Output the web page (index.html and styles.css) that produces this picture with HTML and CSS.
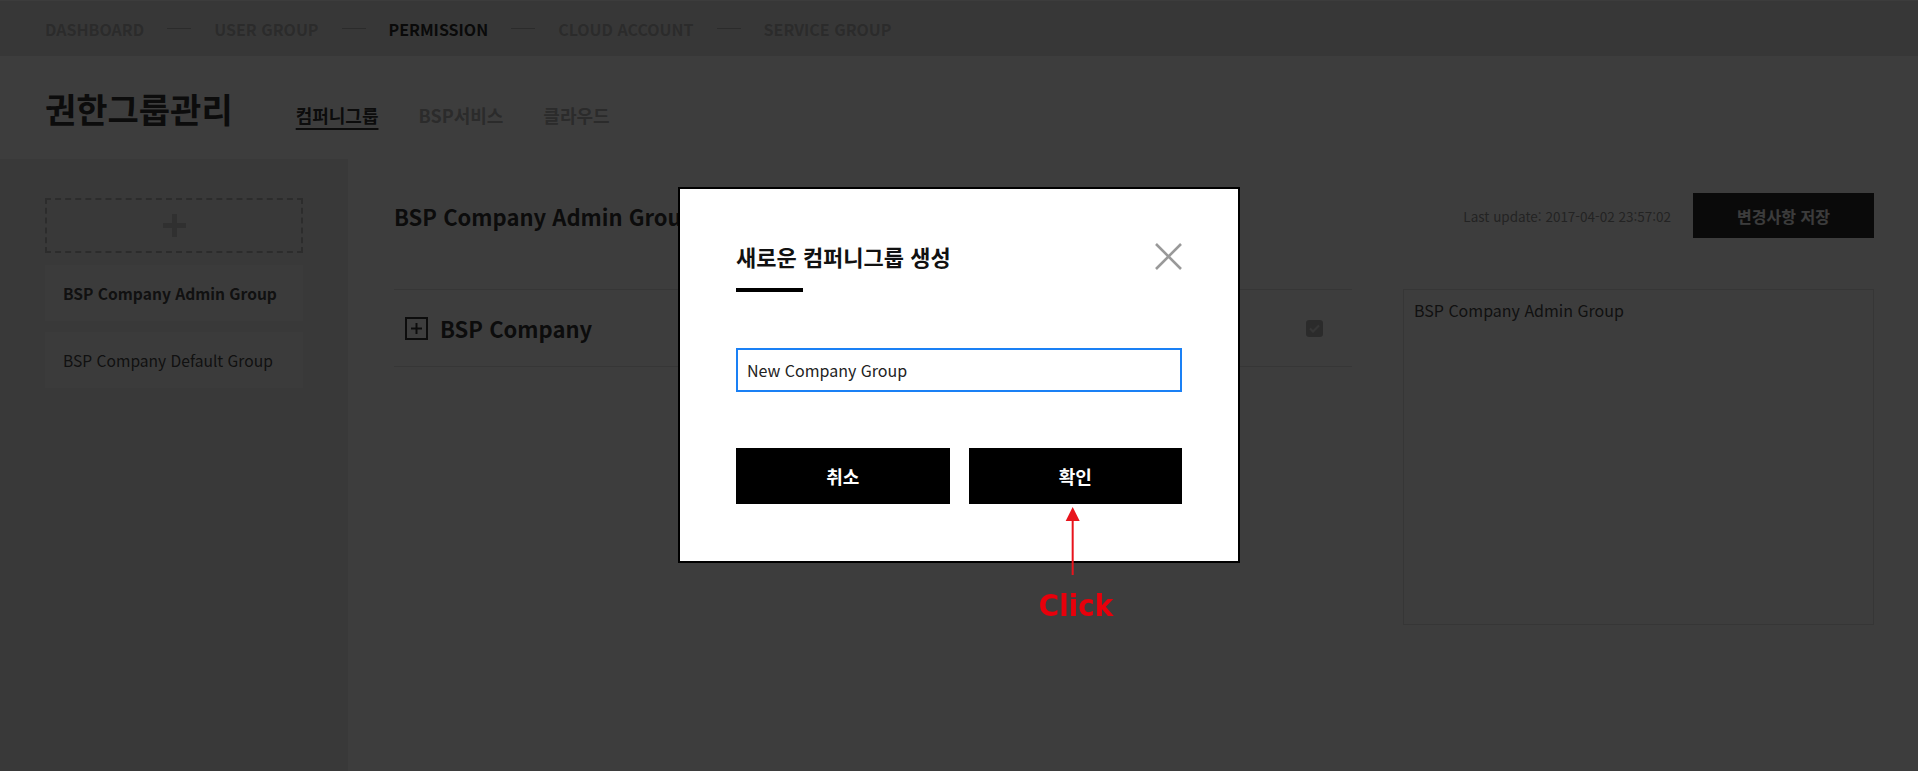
FILE: index.html
```html
<!DOCTYPE html>
<html lang="ko">
<head>
    <meta charset="UTF-8">
    <title>권한그룹관리</title>
    <link rel="stylesheet" href="styles.css">
</head>
<body>
    <!-- 상단 단계 메뉴 -->
    <div class="topnav">
        <span class="step">DASHBOARD</span><span class="dash"></span>
        <span class="step">USER GROUP</span><span class="dash"></span>
        <span class="step on">PERMISSION</span><span class="dash"></span>
        <span class="step">CLOUD ACCOUNT</span><span class="dash"></span>
        <span class="step">SERVICE GROUP</span>
    </div>

    <!-- 페이지 제목 + 탭 -->
    <div class="page-head">
        <h1>권한그룹관리</h1>
        <ul class="tabs">
            <li class="on">컴퍼니그룹</li>
            <li>BSP서비스</li>
            <li>클라우드</li>
        </ul>
    </div>

    <div class="wrap">
        <!-- 그룹 목록 -->
        <div class="side">
            <div class="add-group">
                <svg width="23" height="23" viewBox="0 0 23 23"><rect x="9" y="0" width="5" height="23" fill="#c0c0c0"/><rect x="0" y="9" width="23" height="5" fill="#c0c0c0"/></svg>
            </div>
            <div class="group-item on">BSP Company Admin Group</div>
            <div class="group-item">BSP Company Default Group</div>
        </div>

        <!-- 권한 내용 -->
        <div class="main">
            <div class="main-top">
                <h2>BSP Company Admin Group</h2>
                <span class="last-update">Last update: 2017-04-02 23:57:02</span>
                <button class="btn-save">변경사항 저장</button>
            </div>
            <div class="main-body">
                <div class="tree">
                    <div class="tree-row">
                        <svg class="expand" width="23" height="23" viewBox="0 0 23 23"><rect x="1" y="1" width="21" height="21" fill="none" stroke="#333" stroke-width="2"/><rect x="10.5" y="6" width="2" height="11" fill="#333"/><rect x="6" y="10.5" width="11" height="2" fill="#333"/></svg>
                        <span class="tree-name">BSP Company</span>
                        <svg width="17" height="17" viewBox="0 0 17 17"><rect width="17" height="17" rx="3" fill="#acacac"/><path d="M4 8.5l3 3 6-6" fill="none" stroke="#d8d8d8" stroke-width="2"/></svg>
                    </div>
                </div>
                <div class="desc">BSP Company Admin Group</div>
            </div>
        </div>
    </div>

    <!-- 새 그룹 팝업 -->
    <div class="dim"></div>
    <div class="modal">
        <div class="modal-head">
            <h3>새로운 컴퍼니그룹 생성</h3>
            <svg width="27" height="27" viewBox="0 0 27 27"><path d="M1 1L26 26M26 1L1 26" stroke="#999" stroke-width="2.6"/></svg>
        </div>
        <div class="modal-bar"></div>
        <input type="text" value="New Company Group">
        <div class="modal-btns">
            <button>취소</button>
            <button>확인</button>
        </div>
    </div>

    <div class="guide">
        <svg width="16" height="68" viewBox="0 0 16 68"><polygon points="8,0 15,14 1,14" fill="#e8141c"/><rect x="7" y="13" width="2" height="55" fill="#e8141c"/></svg>
        <span class="click">Click</span>
    </div>
</body>
</html>
```

FILE: styles.css
```css
body {
    margin: 0;
    height: 100vh;
    overflow: hidden;
    background: #f4f4f4;
    font-family: "Noto Sans CJK KR", "Noto Sans", sans-serif;
    color: #333;
}

/* 상단 단계 메뉴 */
.topnav {
    height: 56px;
    box-sizing: border-box;
    border-top: 1px solid #f0f0f0;
    background: #dcdcdc;
    display: flex;
    align-items: center;
    padding-left: 45px;
    font-size: 16px;
    font-weight: bold;
    color: #acacac;
}

.step.on { color: #2a2a2a; }

.dash {
    width: 24px;
    height: 1px;
    background: #acacac;
    margin: 0 23px;
}

/* 제목 영역 */
.page-head {
    height: 103px;
    box-sizing: border-box;
    padding: 31px 45px 0;
    display: flex;
    align-items: baseline;
}

.page-head h1 {
    margin: 0;
    font-size: 34px;
    line-height: 1.3;
}

.tabs {
    list-style: none;
    margin: 0 0 0 63px;
    padding: 0;
    display: flex;
    gap: 40px;
    font-size: 18px;
    font-weight: bold;
    color: #aaa;
}

.tabs li.on {
    color: #333;
    text-decoration: underline;
    text-decoration-thickness: 2px;
    text-underline-offset: 5px;
}

.wrap {
    display: flex;
    height: 612px;
}

/* 그룹 목록 */
.side {
    width: 348px;
    box-sizing: border-box;
    padding: 39px 45px;
    background: #e4e4e4;
    display: flex;
    flex-direction: column;
    gap: 11px;
}

.add-group {
    height: 55px;
    box-sizing: border-box;
    border: 2px dashed #b0b0b0;
    display: flex;
    align-items: center;
    justify-content: center;
    margin-bottom: 1px;
}

.group-item {
    height: 56px;
    display: flex;
    align-items: center;
    padding-left: 18px;
    background: #ececec;
    font-size: 15.6px;
    color: #444;
}

.group-item.on { font-weight: bold; }

/* 권한 내용 */
.main {
    flex: 1;
    padding: 34px 44px 0 46px;
}

.main-top {
    display: flex;
    align-items: center;
    height: 45px;
}

.main-top h2 {
    flex: 1;
    margin: 0;
    font-size: 22px;
}

.last-update {
    font-size: 13.5px;
    color: #8c8c8c;
    margin-right: 22px;
}

.btn-save {
    width: 181px;
    height: 45px;
    border: 0;
    background: #2a2a2a;
    color: #eee;
    font-family: inherit;
    font-size: 16px;
    font-weight: bold;
}

.main-body {
    display: flex;
    gap: 51px;
    margin-top: 51px;
}

.tree { flex: 1; }

.tree-row {
    height: 78px;
    box-sizing: border-box;
    border-top: 1px solid #d8d8d8;
    border-bottom: 1px solid #d8d8d8;
    display: flex;
    align-items: center;
    padding: 0 29px 0 11px;
}

.tree-name {
    flex: 1;
    margin-left: 12px;
    font-size: 22px;
    font-weight: bold;
}

.desc {
    width: 471px;
    height: 336px;
    box-sizing: border-box;
    border: 1px solid #d8d8d8;
    padding: 8px 10px;
    font-size: 16px;
    color: #444;
}

/* 팝업 */
.dim {
    position: fixed;
    inset: 0;
    background: rgba(0,0,0,0.75);
}

.modal {
    position: fixed;
    top: 187px;
    left: 50%;
    transform: translateX(-50%);
    width: 562px;
    box-sizing: border-box;
    border: 2px solid #000;
    background: #fff;
    padding: 52px 56px 57px;
}

.modal-head {
    display: flex;
    justify-content: space-between;
    align-items: center;
}

.modal-head h3 {
    margin: 0;
    font-size: 22px;
    line-height: 30px;
    color: #111;
}

.modal-bar {
    width: 67px;
    height: 4px;
    background: #000;
    margin-top: 17px;
}

.modal input {
    display: block;
    width: 100%;
    height: 44px;
    box-sizing: border-box;
    margin-top: 56px;
    border: 2px solid #1a80f5;
    padding: 0 9px;
    font-family: inherit;
    font-size: 16px;
    color: #222;
    outline: none;
}

.modal-btns {
    display: flex;
    gap: 19px;
    margin-top: 56px;
}

.modal-btns button {
    flex: 1;
    height: 56px;
    border: 0;
    background: #000;
    color: #fff;
    font-family: inherit;
    font-size: 18px;
    font-weight: bold;
}

/* 안내 화살표 */
.guide {
    position: fixed;
    left: 1073px;
    top: 507px;
    transform: translateX(-50%);
    display: flex;
    flex-direction: column;
    align-items: center;
}

.click {
    margin: 15px 0 0 6px;
    font-family: "DejaVu Sans Condensed", "DejaVu Sans", sans-serif;
    font-size: 31px;
    line-height: 1;
    font-weight: bold;
    color: #e8000b;
}
```
